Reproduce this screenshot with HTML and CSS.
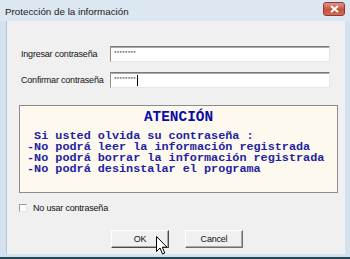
FILE: index.html
```html
<!DOCTYPE html>
<html lang="es">
<head>
    <meta charset="UTF-8">
    <title>Protección de la información</title>
    <link rel="stylesheet" href="styles.css">
</head>
<body>
    <div class="window">
        <div class="titlebar">
            <span class="title">Protección de la información</span>
            <button class="close-btn" aria-label="Cerrar">
                <svg width="9" height="8" viewBox="0 0 9 8"><path d="M1 1 L8 7 M8 1 L1 7" stroke="#fff" stroke-width="2"/></svg>
            </button>
        </div>
        <div class="client">
            <div class="field">
                <label class="field-label">Ingresar contraseña</label>
                <div class="text-input"><span class="stars">********</span></div>
            </div>
            <div class="field">
                <label class="field-label">Confirmar contraseña</label>
                <div class="text-input"><span class="stars">********</span><span class="caret"></span></div>
            </div>

            <div class="warning">
                <div class="warning-title">ATENCIÓN</div>
                <div class="warning-lines"> Si usted olvida su contraseña :
-No podrá leer la información registrada
-No podrá borrar la información registrada
-No podrá desinstalar el programa</div>
            </div>

            <div class="check-row">
                <span class="checkbox"></span>
                <span>No usar contraseña</span>
            </div>

            <div class="buttons">
                <button class="btn btn-default">OK</button>
                <button class="btn">Cancel</button>
            </div>

            <!-- mouse pointer over the OK button -->
            <svg class="pointer" width="12" height="19" viewBox="0 0 12 19">
                <path d="M0.5 0.5 L0.5 15.5 L4 12 L6.5 18 L8.8 17 L6.3 11.2 L11 11.2 Z" fill="#fff" stroke="#000" stroke-width="1"/>
            </svg>
        </div>
    </div>
</body>
</html>
```

FILE: styles.css
```css
body {
    margin: 0;
    width: 350px;
    height: 259px;
    overflow: hidden;
    font-family: "Liberation Sans", Arial, sans-serif;
}

.window {
    width: 350px;
    height: 259px;
    box-sizing: border-box;
    background-color: #d3e2ee; /* glass frame */
    border-bottom: 2px solid #1f4a55;
    padding: 0 5px 3px 6px;
    display: flex;
    flex-direction: column;
    position: relative;
}

.titlebar {
    height: 21px;
    display: flex;
    align-items: center;
    justify-content: space-between;
    background-color: #dce7f1;
    margin: 0 -5px 0 -6px;
    padding: 0 5px 0 5px;
}

.title {
    font-size: 9.8px;
    color: #1b1b1b;
    margin-top: 1px;
}

.close-btn {
    width: 22px;
    height: 14px;
    margin-top: -3px;
    padding: 0;
    border: 1px solid #8a3b35;
    border-radius: 3px;
    background: linear-gradient(#e0958a, #c8503f 55%, #d26a55);
    display: flex;
    align-items: center;
    justify-content: center;
}

.client {
    flex: 1;
    background-color: #f0f0f0;
    border-left: 1px solid #b5c6d4;
    padding: 25px 8px 0 12px;
    position: relative;
    font-size: 9px;
    letter-spacing: -0.2px;
    color: #111;
}

.field {
    display: flex;
    align-items: center;
    height: 16px;
    margin-bottom: 10px;
}

.field-label {
    width: 89px;
    padding-left: 2px;
}

.text-input {
    width: 220px;
    height: 16px;
    box-sizing: border-box;
    background-color: #fff;
    border: 1px solid;
    border-color: #7a7a7a #e6e6e6 #e6e6e6 #8e8e8e;
    box-shadow: inset 0 1px 0 #a8a8a8;
    display: flex;
    align-items: center;
    padding-left: 3px;
}

.stars {
    font-size: 6px;
    letter-spacing: 0.4px;
    color: #333;
    margin-top: -2px;
}

.caret {
    width: 1px;
    height: 11px;
    background-color: #000;
    margin-left: 1px;
}

.warning {
    margin-top: 17px; /* collapses with the field margin above */
    width: 319px;
    height: 88px;
    box-sizing: border-box;
    background-color: #fdf9ee;
    border: 1px solid #8c8c8c;
    color: #2222a2;
    font-family: "Liberation Mono", "Courier New", monospace;
    font-weight: bold;
    letter-spacing: 0;
}

.warning-title {
    text-align: center;
    font-size: 14.4px;
    line-height: 16px;
    margin-top: 3px;
    color: #0a0aa8;
}

.warning-lines {
    white-space: pre;
    font-size: 11.8px;
    line-height: 11px;
    margin-top: 6px;
    padding-left: 7px;
}

.check-row {
    display: flex;
    align-items: center;
    gap: 6px;
    margin-top: 10px;
    height: 10px;
}

.checkbox {
    width: 8px;
    height: 8px;
    box-sizing: border-box;
    background-color: #fff;
    border: 1px solid;
    border-color: #9a9a9a #e2e2e2 #e2e2e2 #9a9a9a;
}

.buttons {
    display: flex;
    justify-content: center;
    gap: 16px;
    margin-top: 17px;
    padding-right: 2px;
}

.btn {
    width: 58px;
    height: 18px;
    padding: 0;
    font-family: "Liberation Sans", Arial, sans-serif;
    font-size: 9px;
    letter-spacing: -0.2px;
    color: #111;
    background-color: #f0f0f0;
    border: 1px solid;
    border-color: #ffffff #6e6e6e #6e6e6e #ffffff;
    box-shadow: inset -1px -1px 0 #a8a8a8;
}

.btn-default {
    border-color: #ffffff #4a4a4a #4a4a4a #ffffff;
}

.pointer {
    position: absolute;
    left: 149px;
    top: 215px;
}
```
